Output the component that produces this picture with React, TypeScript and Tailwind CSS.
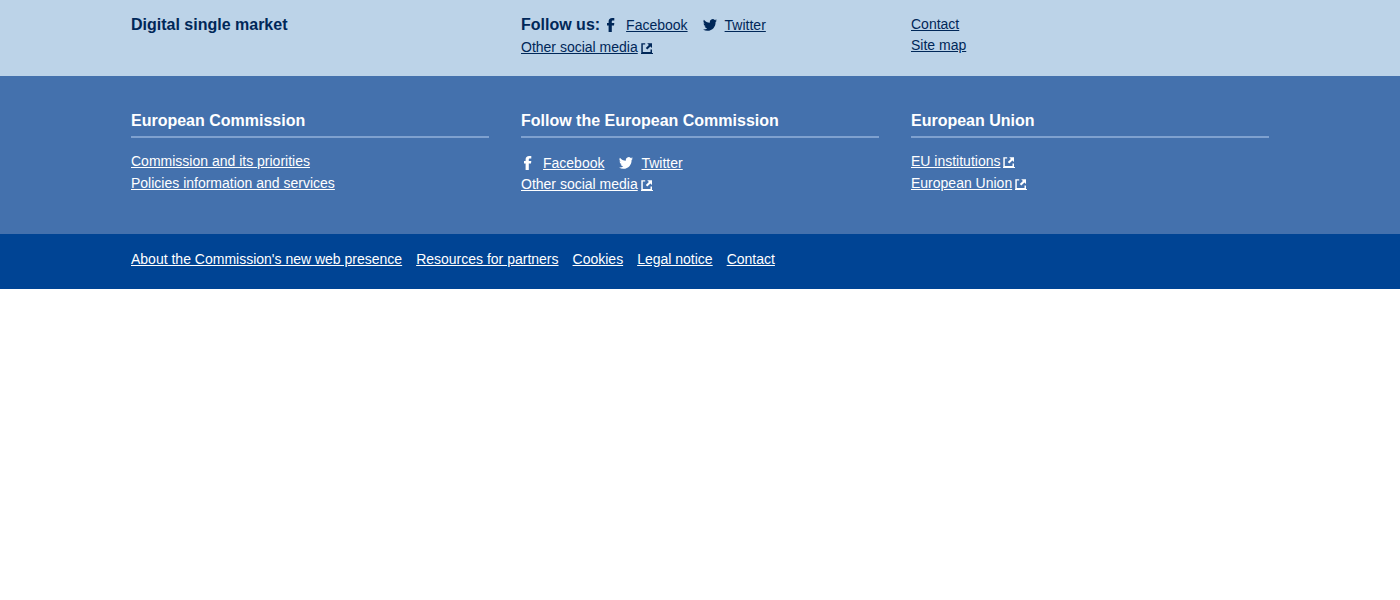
import React from "react";

type IconName = "facebook" | "twitter";

function FacebookIcon() {
  return (
    <svg viewBox="0 0 14 14" className="size-3.5 shrink-0" fill="currentColor" aria-hidden="true">
      <path d="M4.600 14V7.500H3V5h1.600V3.600C4.600 1.200 5.900 0 8.200 0h2.100v2.500H9C8.100 2.500 7.800 2.800 7.800 3.500V5h2.500L10 7.500H7.800V14z" />
    </svg>
  );
}

function TwitterIcon() {
  return (
    <svg viewBox="0 2 24 20" className="h-3 w-3.5 shrink-0" preserveAspectRatio="none" fill="currentColor" aria-hidden="true">
      <path d="M23.950 4.570a10 10 0 0 1-2.820.770 4.960 4.960 0 0 0 2.160-2.720c-.95.550-2 .960-3.130 1.180a4.920 4.920 0 0 0-8.380 4.480C7.690 8.100 4.070 6.130 1.640 3.160a4.920 4.920 0 0 0 1.520 6.570 4.900 4.900 0 0 1-2.230-.61v.06a4.920 4.920 0 0 0 3.950 4.830 5 5 0 0 1-2.210.080 4.940 4.940 0 0 0 4.600 3.420A9.870 9.870 0 0 1 0 19.540a14 14 0 0 0 7.550 2.210c9.050 0 14-7.500 14-13.980 0-.21 0-.42-.02-.63a9.940 9.940 0 0 0 2.420-2.570z" />
    </svg>
  );
}

function ExternalIcon() {
  return (
    <svg viewBox="0 0 12 12" className="ml-[3px] inline size-3 align-[-2px]" fill="currentColor" aria-hidden="true">
      <path d="M0.300 1.200h3.900v1.400H1.800V10h7.700V7.500H11V11H.3z" />
      <path d="M6.200 1.200H11v4.800L9.400 4.400 6.300 7.500 4.800 6 7.900 2.900z" />
      <path d="M0 11h12v1H0z" />
    </svg>
  );
}

function TextLink({ label, external }: { label: string; external?: boolean }) {
  return (
    <a href="#" className="block w-fit">
      <span className="underline">{label}</span>
      {external && <ExternalIcon />}
    </a>
  );
}

function SocialLink({ label, icon }: { label: string; icon: IconName }) {
  return (
    <a href="#" className="flex items-center gap-2">
      {icon === "facebook" ? <FacebookIcon /> : <TwitterIcon />}
      <span className="underline">{label}</span>
    </a>
  );
}

function SocialLinks() {
  return (
    <div className="flex flex-wrap gap-x-[15px] leading-5">
      <SocialLink label="Facebook" icon="facebook" />
      <SocialLink label="Twitter" icon="twitter" />
    </div>
  );
}

function Column({ title, children }: { title: string; children: React.ReactNode }) {
  return (
    <section>
      <h2 className="border-b-2 border-[#7fa1cf] pb-[3px] text-base font-bold leading-6">{title}</h2>
      <div className="pt-3">{children}</div>
    </section>
  );
}

const container = "mx-auto max-w-[1170px] px-4";
const columns = "grid gap-8 md:grid-cols-3";
const legalLinks = [
  "About the Commission's new web presence",
  "Resources for partners",
  "Cookies",
  "Legal notice",
  "Contact",
];

export default function App() {
  return (
    <footer className="font-['Liberation_Sans',Arial,sans-serif] text-sm leading-[22px] text-white">
      <div className="bg-[#bcd3e8] pt-[13px] pb-[18px] leading-[21px] text-[#002758]">
        <div className={container}>
          <div className={columns}>
            <h2 className="text-base font-bold leading-6">Digital single market</h2>
            <div>
              <div className="flex flex-wrap items-center gap-x-1">
                <h2 className="text-base font-bold leading-6">Follow us:</h2>
                <SocialLinks />
              </div>
              <TextLink label="Other social media" external />
            </div>
            <div className="pt-px">
              <TextLink label="Contact" />
              <TextLink label="Site map" />
            </div>
          </div>
        </div>
      </div>
      <div className="bg-[#4471ad] pt-[33px] pb-[39px]">
        <div className={container}>
          <div className={columns}>
            <Column title="European Commission">
              <TextLink label="Commission and its priorities" />
              <TextLink label="Policies information and services" />
            </Column>
            <Column title="Follow the European Commission">
              <div className="pt-[3px]">
                <SocialLinks />
              </div>
              <TextLink label="Other social media" external />
            </Column>
            <Column title="European Union">
              <TextLink label="EU institutions" external />
              <TextLink label="European Union" external />
            </Column>
          </div>
        </div>
      </div>
      <div className="bg-[#004494] pt-3.5 pb-[19px]">
        <nav className={container} aria-label="Legal">
          <ul className="flex flex-wrap gap-x-3.5">
            {legalLinks.map((label) => (
              <li key={label}>
                <TextLink label={label} />
              </li>
            ))}
          </ul>
        </nav>
      </div>
    </footer>
  );
}
